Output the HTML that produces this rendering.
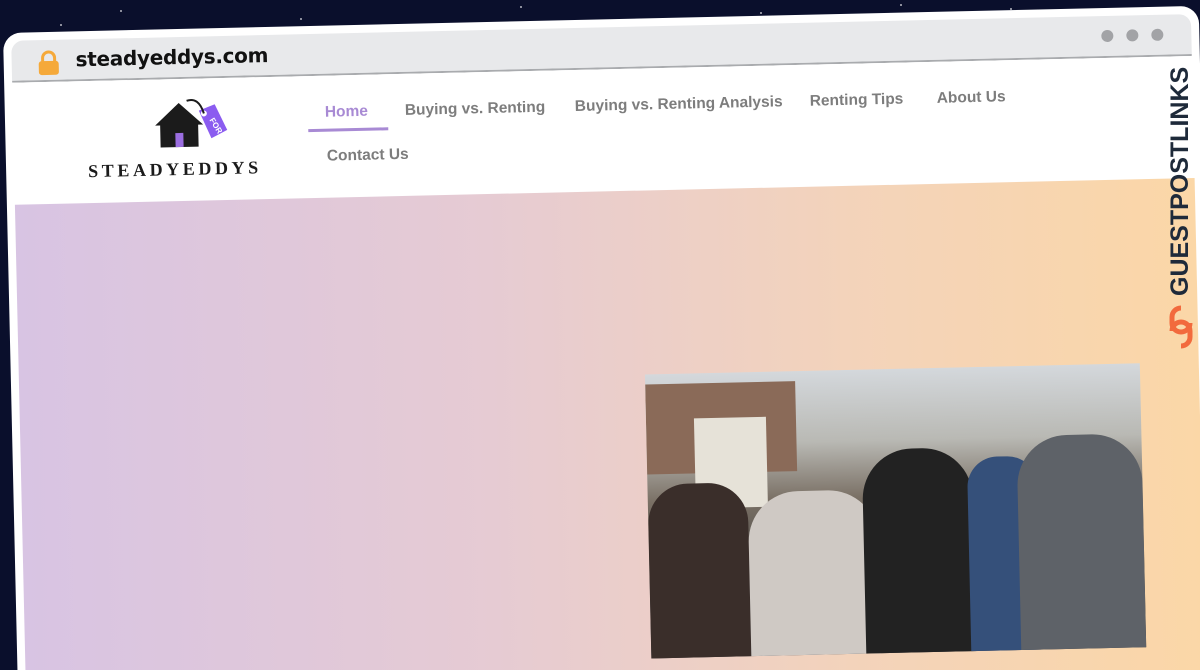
<!DOCTYPE html>
<html style="overflow:hidden;width:1200px;height:670px"><head><meta charset="utf-8"><style>
*{margin:0;padding:0;box-sizing:border-box}
html,body{overflow:hidden}
body{width:1200px;height:670px;overflow:hidden;background:#0a0f2c;position:relative;font-family:"Liberation Sans",sans-serif}
.star{position:absolute;width:2px;height:2px;background:#fff;border-radius:50%;opacity:.7}
.frame{position:absolute;left:3px;top:33px;width:1196px;height:665px;background:#fff;border-radius:18px;transform:rotate(-1.3deg);transform-origin:0 0;overflow:hidden}
.bar{position:absolute;left:8px;top:8px;right:8px;height:42px;background:#e8e9eb;border-radius:12px 12px 0 0;border-bottom:2px solid #a9abae}
.lock{position:absolute;left:26px;top:10px}
.url{position:absolute;left:64px;top:8px;font-family:"DejaVu Sans",sans-serif;font-size:20px;color:#111;font-weight:bold;letter-spacing:-.3px}
.dot{position:absolute;top:14px;width:12px;height:12px;border-radius:50%;background:#a2a3a6}
.hdr{position:absolute;left:8px;right:8px;top:50px;height:122px;background:#fff}
.nav{position:absolute;font-size:15.5px;font-weight:bold;color:#7d7d7d}
.hero{position:absolute;left:8px;right:8px;top:172px;bottom:0;background:linear-gradient(90deg,#d8c4e3 0%,#e6cbd3 40%,#f3d3bb 70%,#fbd7a7 100%)}
.photo{position:absolute;left:634px;top:356px;width:495px;height:284px;overflow:hidden;background:linear-gradient(180deg,#d4d8dc 0%,#b9b9b4 25%,#7a7065 45%,#4c4a48 70%,#2f3038 100%)}
</style></head><body>
<div class="star" style="left:120px;top:10px"></div><div class="star" style="left:300px;top:18px"></div><div class="star" style="left:520px;top:6px"></div><div class="star" style="left:760px;top:12px"></div><div class="star" style="left:900px;top:4px"></div><div class="star" style="left:60px;top:24px"></div><div class="star" style="left:1010px;top:8px"></div>
<div class="frame">
 <div class="bar">
  <svg class="lock" width="22" height="26" viewBox="0 0 22 26"><path d="M5 12V8a6 6 0 0 1 12 0v4" fill="none" stroke="#f5a93a" stroke-width="3"/><rect x="1" y="11" width="20" height="14" rx="3" fill="#f5a93a"/></svg>
  <div class="url">steadyeddys.com</div>
  <div class="dot" style="left:1090px"></div><div class="dot" style="left:1115px"></div><div class="dot" style="left:1140px"></div>
 </div>
 <div class="hdr">
  <svg style="position:absolute;left:140px;top:18px" width="80" height="60" viewBox="0 0 80 60">
   <path d="M2 28 L26 6 L50 28 L45 28 L45 50 L7 50 L7 28Z" fill="#1b1b1b"/>
   <rect x="22" y="36" width="8" height="14" fill="#9b6ee0"/>
   <path d="M46 14 L62 8 L74 34 L58 42Z" fill="#8b5cf0"/>
   <circle cx="51" cy="17" r="3" fill="#fff"/>
   <path d="M51 17 Q46 0 34 4" fill="none" stroke="#1b1b1b" stroke-width="2"/>
   <text x="56" y="28" font-size="8" fill="#fff" font-weight="bold" transform="rotate(60 60 26)">FOR</text>
  </svg>
  <div style="position:absolute;left:74px;top:80px;font-family:'Liberation Serif',serif;font-size:18px;letter-spacing:3.6px;color:#1b1b1b;font-weight:bold">STEADYEDDYS</div>
  <div class="nav" style="left:312px;top:28px;color:#a88ad4">Home</div>
  <div style="position:absolute;left:295px;top:53px;width:80px;height:3px;background:#a88ad4"></div>
  <div class="nav" style="left:392px;top:28px">Buying vs. Renting</div>
  <div class="nav" style="left:562px;top:28px">Buying vs. Renting Analysis</div>
  <div class="nav" style="left:797px;top:28px">Renting Tips</div>
  <div class="nav" style="left:924px;top:28px">About Us</div>
  <div class="nav" style="left:313px;top:72px">Contact Us</div>
 </div>
 <div class="hero"></div>
 <div class="photo">
  <div style="position:absolute;left:0;top:10px;width:150px;height:90px;background:#8a6a58"></div>
  <div style="position:absolute;left:48px;top:45px;width:72px;height:90px;background:#e6e2d8"></div>
  <div style="position:absolute;left:0;top:110px;width:100px;height:180px;background:#3a2e2a;border-radius:40px 40px 0 0"></div>
  <div style="position:absolute;left:100px;top:120px;width:130px;height:170px;background:#cfc9c4;border-radius:50px 50px 0 0"></div>
  <div style="position:absolute;left:215px;top:80px;width:110px;height:210px;background:#222;border-radius:50px 50px 0 0"></div>
  <div style="position:absolute;left:320px;top:90px;width:70px;height:200px;background:#35507a;border-radius:30px 30px 0 0"></div>
  <div style="position:absolute;left:370px;top:70px;width:125px;height:220px;background:#5e6268;border-radius:50px 50px 0 0"></div>
 </div>
</div>
<div style="position:absolute;left:1166px;top:296px;transform:rotate(-90deg);transform-origin:0 0;font-size:25px;font-weight:900;color:#1e2a3a;letter-spacing:0;white-space:nowrap">GUESTPOSTLINKS</div>
<svg style="position:absolute;left:1168px;top:304px" width="26" height="46" viewBox="0 0 26 46"><path d="M13 4a9 9 0 0 0-9 9v6a9 9 0 0 0 18 0" fill="none" stroke="#f26a3d" stroke-width="5"/><path d="M13 42a9 9 0 0 0 9-9v-6a9 9 0 0 0-18 0" fill="none" stroke="#f26a3d" stroke-width="5"/></svg>
</body></html>
